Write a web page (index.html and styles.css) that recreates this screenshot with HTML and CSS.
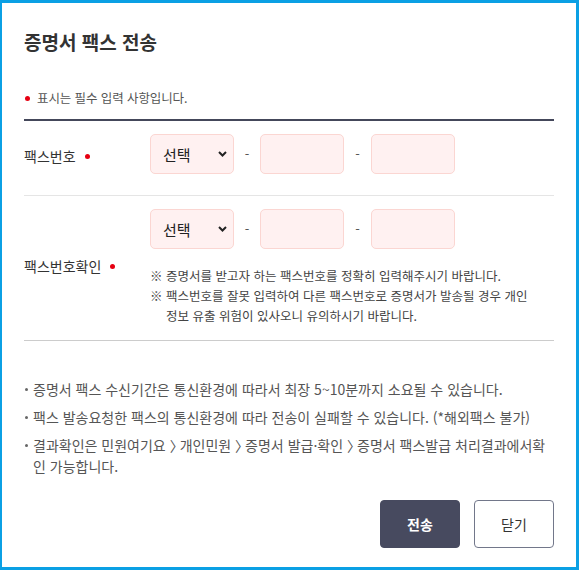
FILE: index.html
```html
<!DOCTYPE html>
<html lang="ko">
<head>
<meta charset="utf-8">
<title>증명서 팩스 전송</title>
<link rel="stylesheet" href="styles.css">
</head>
<body>
<div class="modal">
  <h2 class="title">증명서 팩스 전송</h2>
  <p class="req"><span class="dot"></span>표시는 필수 입력 사항입니다.</p>
  <div class="form">
    <div class="row row1">
      <div class="label">팩스번호<span class="dot"></span></div>
      <div class="field">
        <div class="inputs">
          <div class="select"><span>선택</span><svg width="9" height="6" viewBox="0 0 9 6"><path d="M1 1 L4.5 4.5 L8 1" fill="none" stroke="#222" stroke-width="2"/></svg></div>
          <span class="dash">-</span>
          <div class="box"></div>
          <span class="dash">-</span>
          <div class="box"></div>
        </div>
      </div>
    </div>
    <div class="row row2">
      <div class="label">팩스번호확인<span class="dot"></span></div>
      <div class="field">
        <div class="inputs">
          <div class="select"><span>선택</span><svg width="9" height="6" viewBox="0 0 9 6"><path d="M1 1 L4.5 4.5 L8 1" fill="none" stroke="#222" stroke-width="2"/></svg></div>
          <span class="dash">-</span>
          <div class="box"></div>
          <span class="dash">-</span>
          <div class="box"></div>
        </div>
        <ul class="notes">
          <li>증명서를 받고자 하는 팩스번호를 정확히 입력해주시기 바랍니다.</li>
          <li>팩스번호를 잘못 입력하여 다른 팩스번호로 증명서가 발송될 경우 개인 정보 유출 위험이 있사오니 유의하시기 바랍니다.</li>
        </ul>
      </div>
    </div>
  </div>
  <ul class="info">
    <li>증명서 팩스 수신기간은 통신환경에 따라서 최장 5~10분까지 소요될 수 있습니다.</li>
    <li>팩스 발송요청한 팩스의 통신환경에 따라 전송이 실패할 수 있습니다. (*해외팩스 불가)</li>
    <li>결과확인은 민원여기요 <span class="gt">〉</span>개인민원 <span class="gt">〉</span>증명서 발급·확인 <span class="gt">〉</span>증명서 팩스발급 처리결과에서확<br>인 가능합니다.</li>
  </ul>
  <div class="btns">
    <button class="btn primary">전송</button>
    <button class="btn">닫기</button>
  </div>
</div>
</body>
</html>
```

FILE: styles.css
```css
* { box-sizing: border-box; }
html, body { margin: 0; padding: 0; }
body {
  font-family: "Noto Sans CJK KR", "Noto Sans", sans-serif;
  background: #fff;
  width: 579px;
  height: 570px;
  overflow: hidden;
}
.modal {
  width: 579px;
  height: 570px;
  border-style: solid;
  border-color: #0ba0e4;
  border-width: 3px 3px 3px 2px;
  padding: 26px 22px 19px 22px;
  background: #fff;
}
.title {
  margin: 0;
  font-size: 19px;
  line-height: 26px;
  font-weight: 700;
  color: #333;
}
.req {
  margin: 34px 0 0 0;
  font-size: 12.5px;
  line-height: 18px;
  color: #555;
  display: flex;
  align-items: center;
  letter-spacing: -0.1px;
}
.dot {
  display: inline-block;
  width: 5px;
  height: 5px;
  border-radius: 50%;
  background: #e60012;
}
.req .dot { margin: 0 7px 0 1px; }
.form {
  margin-top: 12px;
  border-top: 2px solid #44475a;
}
.row {
  display: grid;
  grid-template-columns: 126px 1fr;
  align-items: center;
}
.row1 {
  padding: 13px 0 21px;
  border-bottom: 1px solid #e5e5e5;
}
.row2 {
  padding: 13px 0 14px;
  border-bottom: 1px solid #cccccc;
}
.label {
  font-size: 14px;
  line-height: 20px;
  color: #333;
  display: flex;
  align-items: center;
}
.label .dot { margin-left: 9px; }
.row1 .label { margin-top: 4px; }
.row2 .label { margin-top: -3px; }
.inputs {
  display: flex;
  align-items: center;
}
.select {
  width: 84px;
  height: 40px;
  border: 1px solid #fbd6d2;
  background: #fff1f1;
  border-radius: 5px;
  display: flex;
  align-items: center;
  justify-content: space-between;
  padding: 0 6px 0 12px;
  font-size: 15px;
  color: #222;
}
.select svg { display: block; }
.box {
  width: 84px;
  height: 40px;
  border: 1px solid #fbd6d2;
  background: #fff1f1;
  border-radius: 5px;
}
.dash {
  width: 26px;
  text-align: center;
  font-size: 13px;
  color: #555;
  line-height: 20px;
}
.inputs .dash:nth-of-type(2) { width: 27px; }
.notes {
  list-style: none;
  margin: 17px 0 0 0;
  padding: 0 12px 0 0;
  font-size: 12.5px;
  line-height: 20px;
  color: #444;
}
.notes li {
  padding-left: 16px;
  text-indent: -16px;
}
.notes li::before {
  content: "※";
  display: inline-block;
  width: 16px;
  text-indent: 0;
}
.info {
  list-style: none;
  margin: 38px 0 0 0;
  padding: 0;
  font-size: 14px;
  line-height: 21px;
  color: #555;
  word-break: break-all;
}
.info li {
  position: relative;
  padding-left: 9px;
  margin-bottom: 7px;
}
.info li:last-child { margin-bottom: 0; }
.info li::before {
  content: "";
  position: absolute;
  left: 1px;
  top: 9px;
  width: 3px;
  height: 3px;
  border-radius: 50%;
  background: #666;
}
.gt {
  letter-spacing: -4px;
}
.btns {
  display: flex;
  justify-content: flex-end;
  gap: 14px;
  margin-top: 23px;
}
.btn {
  width: 80px;
  height: 48px;
  border: 1px solid #72778a;
  border-radius: 4px;
  background: #fff;
  font-family: "Noto Sans CJK KR", "Noto Sans", sans-serif;
  font-size: 14px;
  color: #333;
  padding: 0;
}
.btn.primary {
  background: #474a5f;
  border-color: #474a5f;
  color: #fff;
  font-weight: 700;
}
```
